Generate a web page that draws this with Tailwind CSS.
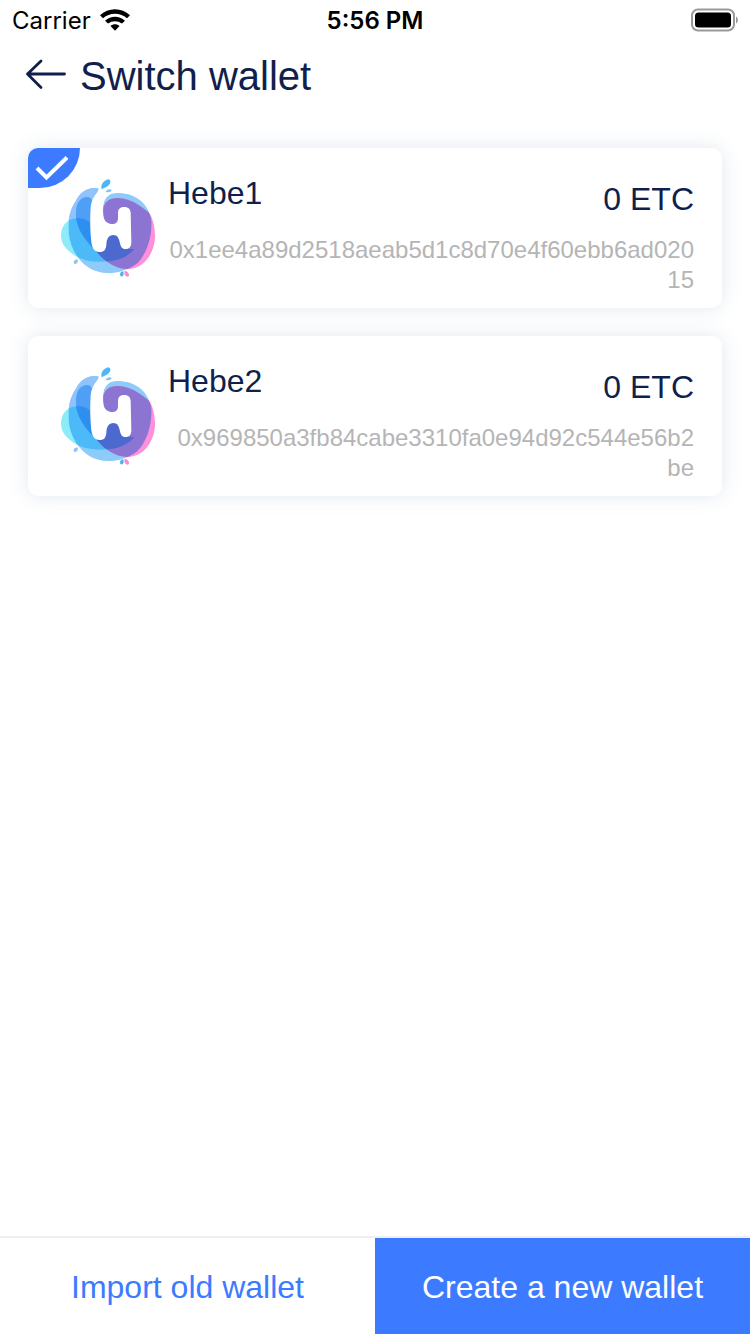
<!DOCTYPE html>
<html lang="en">
<head>
<meta charset="utf-8">
<meta name="viewport" content="width=device-width, initial-scale=1">
<title>Switch wallet</title>
<script src="https://cdn.jsdelivr.net/npm/@tailwindcss/browser@4"></script>
</head>
<body class="flex min-h-screen flex-col bg-white font-['Liberation_Sans',Arial,sans-serif] text-[#111f4d]">

<svg class="absolute h-0 w-0" aria-hidden="true">
  <defs>
    <path id="outer" d="M132 50C104 42 76 58 63 86C45 112 38 145 41 184C48 246 92 303 158 303C192 303 222 292 245 275C273 250 290 200 290 150C284 98 244 64 192 63C164 62 146 74 145 100L118 110Z"/>
    <path id="cyan" d="M18 190C18 162 36 139 68 138C90 138 108 148 120 172L140 190L232 190L232 236C216 256 190 268 140 269C104 270 72 263 46 241C26 226 18 208 18 190Z"/>
    <path id="inner" d="M110 84C106 74 94 73 82 79C67 88 62 106 63 132C64 168 90 206 124 238L150 236L130 120Z"/>
    <path id="pink" d="M145 122C142 92 162 77 190 78C226 79 256 102 280 120C294 134 301 172 300 196C298 240 272 287 222 291C182 293 144 266 119 232L150 190Z"/>
    <clipPath id="in-outer"><use href="#outer"/></clipPath>
    <clipPath id="in-cyan"><path d="M18 190C18 162 36 139 68 138C90 138 108 148 120 172L140 190L200 190L212 231L238 231C216 256 190 268 140 269C104 270 72 263 46 241C26 226 18 208 18 190Z"/></clipPath>
    <symbol id="hebe" viewBox="0 0 318 330">
      <use href="#outer" fill="#8dcbfa"/>
      <path d="M132 50C104 42 76 58 63 86C49 106 42 128 40 156L120 156V70Z" fill="#90c3fc"/>
      <use href="#cyan" fill="#8eebfa"/>
      <g clip-path="url(#in-outer)"><use href="#cyan" fill="#4cbaf8"/></g>
      <use href="#inner" fill="#509ff6"/>
      <g clip-path="url(#in-cyan)"><use href="#inner" fill="#2d90f0"/></g>
      <use href="#pink" fill="#ff8fd8"/>
      <g clip-path="url(#in-outer)"><use href="#pink" fill="#8b74d2"/></g>
      <g clip-path="url(#in-cyan)"><use href="#pink" fill="#4c69d0"/></g>
      <path d="M131 50C130 64 110 72 107 106C105 140 105 174 109 210C112 232 120 240 134 240C148 240 153 232 154 218C155 200 161 189 175 189C190 189 192 202 195 214C198 228 204 232 214 231C225 230 229 222 229 210L227 122C226 110 218 105 207 105C194 105 189 112 189 124V140C188 152 181 157 170 156C154 155 145 144 144 124C142 96 148 78 164 68L150 44Z" fill="#fff"/>
      <path d="M140 52C136 39 145 25 160 22C170 24 167 36 158 43C152 47 146 48 140 52Z" fill="#4cb8f7"/>
      <path d="M152 60C155 52 164 50 170 54C168 60 160 62 152 60Z" fill="#7cc4f9"/>
      <path d="M56 271C56 264 62 262 69 263C69 272 64 277 59 276C57 275 56 273 56 271Z" fill="#8cc4fb"/>
      <path d="M204 298C197 299 193 305 196 311C200 316 206 312 206 306C206 302 205 300 204 298Z" fill="#45b5f3"/>
      <path d="M208 296C217 297 223 303 222 311C219 317 211 314 209 307C208 303 208 300 208 296Z" fill="#fb8ad6"/>
    </symbol>
  </defs>
</svg>

<div class="grid h-10 grid-cols-3 items-center px-3 font-['Inter',sans-serif] text-2xl text-black">
  <div class="flex items-center gap-2">
    <span class="pt-0.5">Carrier</span>
    <svg class="h-6 w-8" viewBox="0 0 32 24" aria-label="Wi-Fi" role="img">
      <path d="M1 7.300C9 -.8 23 -.8 31 7.300L28 10.300C21.500 4.200 10.500 4.200 4 10.300Z"/>
      <path d="M6 12.700C12 7.400 20 7.400 26 12.700L23 15.600C19 12.300 13 12.300 9 15.600Z"/>
      <path d="M11.500 18C14 15.600 18 15.600 20.500 18L16 22.800Z"/>
    </svg>
  </div>
  <span class="pt-0.5 text-center font-semibold">5:56 PM</span>
  <svg class="h-6 w-12 justify-self-end" viewBox="0 0 48 24" aria-label="Battery full" role="img">
    <rect x="2" y="1.500" width="42" height="21" rx="6" fill="none" stroke="#999" stroke-width="2"/>
    <rect x="5" y="4.500" width="36" height="15" rx="3.500"/>
    <path d="M46 8.500C48.500 9.500 48.500 14.500 46 15.500Z" fill="#999"/>
  </svg>
</div>

<header class="flex h-[72px] items-center gap-3 px-6">
  <button type="button" aria-label="Back" class="h-11 w-11">
    <svg class="h-11 w-11" viewBox="0 0 44 44" fill="none" stroke="#111f4d" stroke-width="2.800" stroke-linecap="round" stroke-linejoin="round">
      <path d="M17 7L3.500 20L17 33.500M3.500 20H40.500"/>
    </svg>
  </button>
  <h1 class="text-[40px] leading-[46px]">Switch wallet</h1>
</header>

<main class="flex flex-1 flex-col gap-7 px-7 pt-9">
  <button type="button" aria-pressed="true" class="relative flex w-full items-start rounded-[10px] bg-white pl-[27px] pr-7 shadow-[0_0_20px_rgba(70,120,160,0.16)]">
    <span class="absolute left-0 top-0 rounded-tl-[10px] rounded-br-[40px] bg-[#3c7bff]">
      <svg class="h-10 w-[52px]" viewBox="0 0 52 40" fill="none" stroke="#fff" stroke-width="4"><path d="M9 20L18.500 29.500L39 9.500"/></svg>
    </span>
    <svg class="mt-6 h-[110px] w-[106px] shrink-0" aria-hidden="true"><use href="#hebe"/></svg>
    <span class="flex min-w-0 flex-1 flex-col py-[13px] pl-[7px]">
      <span class="flex items-start justify-between text-[32px] leading-9">
        <span class="pt-[14px]">Hebe1</span>
        <span class="pt-5">0 ETC</span>
      </span>
      <span class="break-all pt-[18px] text-right text-2xl leading-[30px] text-[#b5b5b5]">0x1ee4a89d2518aeab5d1c8d70e4f60ebb6ad02015</span>
    </span>
  </button>
  <button type="button" aria-pressed="false" class="relative flex w-full items-start rounded-[10px] bg-white pl-[27px] pr-7 shadow-[0_0_20px_rgba(70,120,160,0.16)]">
    <svg class="mt-6 h-[110px] w-[106px] shrink-0" aria-hidden="true"><use href="#hebe"/></svg>
    <span class="flex min-w-0 flex-1 flex-col py-[13px] pl-[7px]">
      <span class="flex items-start justify-between text-[32px] leading-9">
        <span class="pt-[14px]">Hebe2</span>
        <span class="pt-5">0 ETC</span>
      </span>
      <span class="break-all pt-[18px] text-right text-2xl leading-[30px] text-[#b5b5b5]">0x969850a3fb84cabe3310fa0e94d92c544e56b2be</span>
    </span>
  </button>
</main>

<footer class="grid grid-cols-2 border-t-2 border-[#eeeef5] text-[32px]">
  <button type="button" class="h-24 bg-white pt-0.5 text-[#3c7bff]">Import old wallet</button>
  <button type="button" class="h-24 bg-[#3c7bff] pt-0.5 text-white">Create a new wallet</button>
</footer>
</body>
</html>
